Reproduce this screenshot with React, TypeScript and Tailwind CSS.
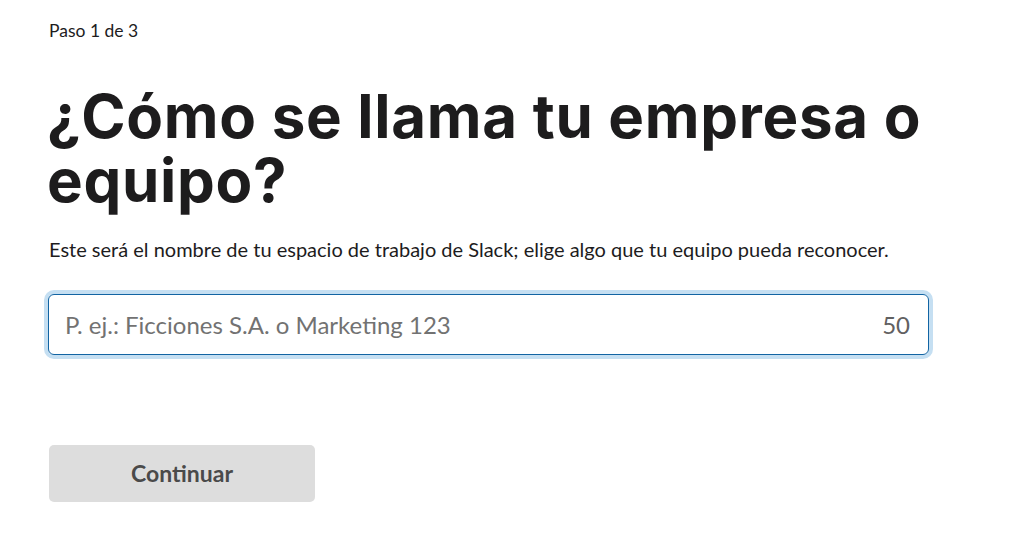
export default function App() {
  return (
    <div className="w-[1024px] h-[538px] bg-white overflow-hidden" style={{ fontFamily: "Lato, 'Liberation Sans', sans-serif" }}>
      <div className="pl-[49px] pt-[20px] w-[970px]">
        <div className="text-[17.5px] leading-[22px] text-[#1d1c1d]">Paso 1 de 3</div>
        <h1 className="mt-[42px] text-[60px] leading-[64px] font-bold text-[#1d1c1d] tracking-[0.7px] -ml-[2px]" style={{ fontFamily: "Inter, 'Liberation Sans', sans-serif" }}>
          ¿Cómo se llama tu empresa o equipo?
        </h1>
        <p className="mt-[24px] text-[20px] leading-[26px] text-[#1d1c1d]">
          Este será el nombre de tu espacio de trabajo de Slack; elige algo que tu equipo pueda reconocer.
        </p>
        <div className="mt-[32px] -ml-[1px] w-[881px] h-[61px] rounded-[6px] border border-[#1264a3] ring-4 ring-[#c5dff2] flex items-center justify-between pl-[16px] pr-[18px]">
          <span className="text-[24px] text-[#727272]">P. ej.: Ficciones S.A. o Marketing 123</span>
          <span className="text-[24px] text-[#616061]">50</span>
        </div>
        <button className="mt-[90px] w-[266px] h-[57px] rounded-[5px] bg-[#dddddd] text-[23px] font-bold text-[#4a4a4a]">
          Continuar
        </button>
      </div>
    </div>
  );
}
